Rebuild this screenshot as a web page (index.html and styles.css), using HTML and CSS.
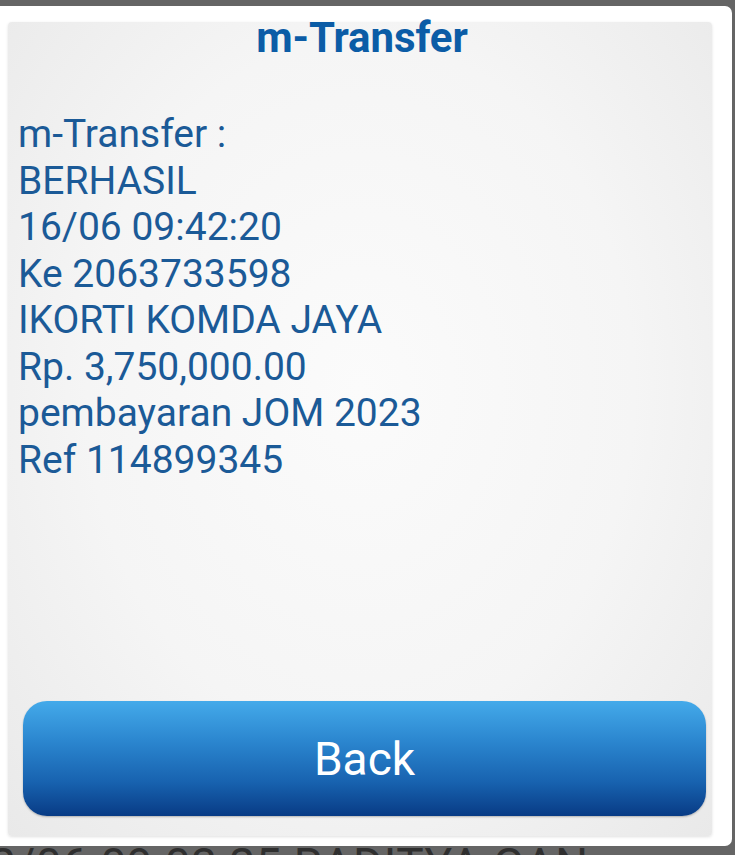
FILE: index.html
```html
<!DOCTYPE html>
<html>
<head>
<meta charset="utf-8">
<link rel="stylesheet" href="styles.css">
</head>
<body>
<div class="screen">
  <div class="dialog">
    <div class="panel">
      <h1 class="title">m-Transfer</h1>
      <div class="message">
        <div>m-Transfer :</div>
        <div>BERHASIL</div>
        <div>16/06 09:42:20</div>
        <div>Ke 2063733598</div>
        <div>IKORTI KOMDA JAYA</div>
        <div>Rp. 3,750,000.00</div>
        <div>pembayaran JOM 2023</div>
        <div>Ref 114899345</div>
      </div>
      <button class="back">Back</button>
    </div>
  </div>
  <div class="behind">
    <div class="behind-text">2/06 09:03:25 RADITYA GAN</div>
  </div>
</div>
</body>
</html>
```
FILE: styles.css
```css
html, body {
  margin: 0;
  padding: 0;
  background: #656565;
  font-family: Roboto, "Noto Sans", sans-serif;
}
.screen {
  width: 735px;
  height: 855px;
  overflow: hidden;
  padding-top: 6px;
  box-sizing: border-box;
}
.dialog {
  width: 732px;
  height: 840px;
  background: #ffffff;
  border-radius: 0 7px 7px 0;
  box-sizing: border-box;
  padding: 16px 20px 10px 8px;
}
.panel {
  height: 100%;
  box-sizing: border-box;
  display: flex;
  flex-direction: column;
  background: radial-gradient(ellipse at 50% 45%, #fbfbfb 0%, #f5f5f5 55%, #e9e9e9 100%);
  border-radius: 4px;
  box-shadow: 0 1px 3px rgba(0,0,0,0.12);
  padding: 0 6px 20px 10px;
}
.title {
  margin: -1px 0 0 0;
  text-align: center;
  font-size: 42px;
  line-height: 34px;
  font-weight: 700;
  color: #0b5ca6;
  letter-spacing: -0.1px;
}
.message {
  margin-top: 56px;
  color: #1b5a97;
  font-size: 39px;
  line-height: 46.5px;
  flex: 1;
}
.back {
  height: 115px;
  margin: 0 0 0 5px;
  border: none;
  border-radius: 24px;
  background: linear-gradient(to bottom, #44aaea 0%, #2b86cf 35%, #1863b0 70%, #083b85 100%);
  color: #ffffff;
  font-family: Roboto, "Noto Sans", sans-serif;
  font-size: 46px;
  font-weight: 400;
  padding: 0;
  box-shadow: 0 1px 2px rgba(0,0,0,0.25);
}
.behind {
  height: 9px;
  overflow: hidden;
}
.behind-text {
  margin: -8px 0 0 -10px;
  font-size: 46px;
  line-height: 54px;
  color: #2f2f2f;
  white-space: nowrap;
  letter-spacing: 0.5px;
}
```
